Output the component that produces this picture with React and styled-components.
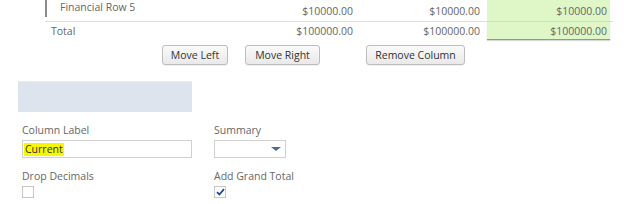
import React from 'react';
import styled, { createGlobalStyle } from 'styled-components';

const GlobalStyle = createGlobalStyle`
  html, body {
    margin: 0;
    padding: 0;
    background: #fff;
  }
  body {
    font-family: "Open Sans", "Liberation Sans", sans-serif;
    font-size: 10.5px;
    color: #666;
  }
`;

const Page = styled.div`
  width: 624px;
  height: 204px;
  overflow: hidden;
`;

const Table = styled.div`
  margin-left: 45px;
  width: 568px;
`;

const Row = styled.div`
  display: grid;
  grid-template-columns: 185px 130px 127px 123px 3px;
  border-bottom: ${(p) => (p.$last ? 'none' : '1px solid #dcdcdc')};
  height: ${(p) => (p.$last ? '17px' : '21px')};
`;

const LabelCell = styled.div`
  display: flex;
  align-items: center;
  padding-left: ${(p) => (p.$nested ? '13px' : '6px')};
  border-left: ${(p) => (p.$nested ? '2px solid #8a8a8a' : 'none')};
  margin-bottom: ${(p) => (p.$nested ? '4px' : '0')};
  margin-top: ${(p) => (p.$nested ? '-4px' : '0')};
  white-space: nowrap;
`;

const Amount = styled.div`
  display: flex;
  align-items: center;
  justify-content: flex-end;
  padding-right: 7px;
`;

const CurrentAmount = styled(Amount)`
  background: #dff7c7;
  padding-right: 3px;
  border-bottom: ${(p) => (p.$last ? '1px solid #8f9a88' : '1px solid #c9e2b2')};
  margin-bottom: -1px;
  box-shadow: ${(p) => (p.$last ? '0 1px 1px rgba(0,0,0,0.15)' : 'none')};
  position: relative;
`;

const ButtonBar = styled.div`
  display: flex;
  margin-top: 6px;
  padding-left: 162px;
  height: 20px;
`;

const Button = styled.button`
  font-family: "Open Sans", "Liberation Sans", sans-serif;
  font-size: 10.5px;
  color: #333;
  height: 20px;
  width: ${(p) => p.$w}px;
  margin-left: ${(p) => p.$gap || 0}px;
  padding: 0;
  border: 1px solid #bdbdbd;
  border-radius: 3px;
  background: linear-gradient(#fafafa, #e9e9e9);
  box-shadow: 0 1px 0 rgba(0, 0, 0, 0.06);
`;

const Form = styled.div`
  padding-left: 18px;
  margin-top: 16px;
`;

const Banner = styled.div`
  width: 174px;
  height: 31px;
  background: #dee4ee;
  border-top: 1px solid #e8ecf2;
  box-sizing: border-box;
`;

const Fields = styled.div`
  display: grid;
  grid-template-columns: 192px 170px;
  padding-left: 4px;
  margin-top: 11px;
  row-gap: 11px;
`;

const Field = styled.div`
  display: flex;
  flex-direction: column;
`;

const FieldLabel = styled.div`
  height: 14px;
  line-height: 14px;
  margin-bottom: 3px;
  white-space: nowrap;
`;

const TextBox = styled.div`
  width: ${(p) => p.$w}px;
  height: 18px;
  box-sizing: border-box;
  border: 1px solid #d0d0d0;
  display: flex;
  align-items: center;
  padding-left: 1px;
  position: relative;
`;

const Highlight = styled.span`
  background: #f7f700;
  color: #333;
  line-height: 13px;
  padding: 0 1px;
`;

const Caret = styled.span`
  position: absolute;
  right: 4px;
  top: 6px;
  width: 0;
  height: 0;
  border-left: 5px solid transparent;
  border-right: 5px solid transparent;
  border-top: 4px solid #4f6b8f;
`;

const Check = styled.div`
  width: 12px;
  height: 12px;
  box-sizing: border-box;
  border: 1px solid #c8c8c8;
  background: #fff;
  display: flex;
  align-items: center;
  justify-content: center;
`;

const CheckMark = () => (
  <svg width="9" height="8" viewBox="0 0 9 8">
    <path d="M1 4.2 L3.4 6.5 L8 1.2" fill="none" stroke="#1d4a8a" strokeWidth="1.8" />
  </svg>
);

export default function App() {
  return (
    <Page>
      <GlobalStyle />
      <Table>
        <Row>
          <LabelCell $nested>Financial Row 5</LabelCell>
          <Amount>$10000.00</Amount>
          <Amount>$10000.00</Amount>
          <CurrentAmount>$10000.00</CurrentAmount>
          <div />
        </Row>
        <Row $last>
          <LabelCell>Total</LabelCell>
          <Amount>$100000.00</Amount>
          <Amount>$100000.00</Amount>
          <CurrentAmount $last>$100000.00</CurrentAmount>
          <div />
        </Row>
      </Table>
      <ButtonBar>
        <Button $w={66}>Move Left</Button>
        <Button $w={75} $gap={17}>Move Right</Button>
        <Button $w={99} $gap={46}>Remove Column</Button>
      </ButtonBar>
      <Form>
        <Banner />
        <Fields>
          <Field>
            <FieldLabel>Column Label</FieldLabel>
            <TextBox $w={170}>
              <Highlight>Current</Highlight>
            </TextBox>
          </Field>
          <Field>
            <FieldLabel>Summary</FieldLabel>
            <TextBox $w={72}>
              <Caret />
            </TextBox>
          </Field>
          <Field>
            <FieldLabel>Drop Decimals</FieldLabel>
            <Check />
          </Field>
          <Field>
            <FieldLabel>Add Grand Total</FieldLabel>
            <Check>
              <CheckMark />
            </Check>
          </Field>
        </Fields>
      </Form>
    </Page>
  );
}
